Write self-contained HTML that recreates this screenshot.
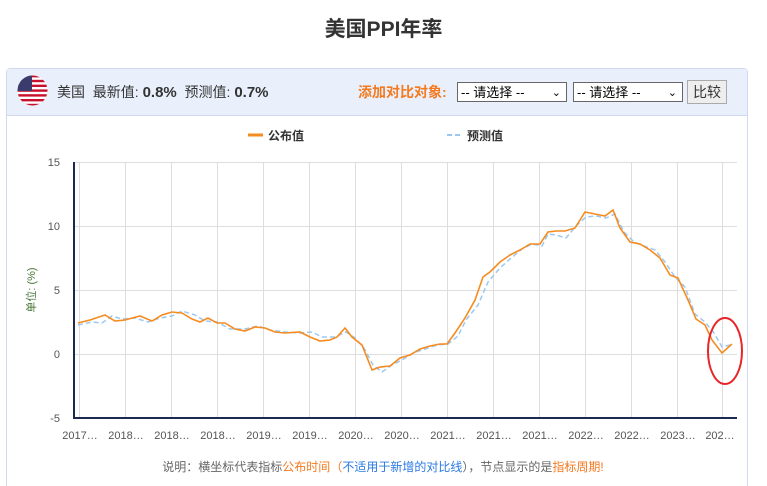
<!DOCTYPE html>
<html style="overflow:hidden;height:486px"><head><meta charset="utf-8"><style>
body{margin:0;width:767px;height:486px;background:#fff;font-family:"Liberation Sans","Noto Sans CJK SC",sans-serif;overflow:hidden;position:relative}
.t{position:absolute;left:0;width:767px;top:13px;text-align:center;font-size:21px;font-weight:bold;color:#333}
.panel{position:absolute;left:6px;top:68px;width:740px;height:425px;border:1px solid #cfdaf0;border-bottom:none;border-radius:4px 4px 0 0;background:#fff}
.hd{position:absolute;left:0;top:0;width:740px;height:46px;background:#e9f0fb;border-bottom:1px solid #cfdaf0;font-size:14px;color:#333}
.hd span{position:absolute;top:13px}
.sel{position:absolute;top:13px;height:20px;border:1px solid #666;background:#fff;font-size:13px;line-height:20px;padding-left:3px;box-sizing:border-box;color:#000}
.btn{position:absolute;top:11px;left:680px;width:40px;height:24px;border:1px solid #aaa;background:#eee;font-size:14px;line-height:22px;text-align:center;box-sizing:border-box}
</style></head><body>
<div class="t">美国PPI年率</div>
<div class="panel">
<div class="hd">
<svg style="position:absolute;left:10px;top:6px" width="31" height="31" viewBox="0 0 31 31"><defs><clipPath id="c"><circle cx="15.5" cy="15.5" r="15"/></clipPath></defs><g clip-path="url(#c)"><rect width="31" height="31" fill="#fff"/><g fill="#c8102e"><rect y="0" width="31" height="2.4"/><rect y="4.8" width="31" height="2.4"/><rect y="9.6" width="31" height="2.4"/><rect y="14.4" width="31" height="2.4"/><rect y="19.2" width="31" height="2.4"/><rect y="24" width="31" height="2.4"/><rect y="28.8" width="31" height="2.4"/></g><rect width="15" height="16" fill="#3c3b6e"/></g></svg>
<span style="left:50px">美国 &nbsp;最新值: <b style="font-size:15px">0.8%</b> &nbsp;预测值: <b style="font-size:15px">0.7%</b></span>
<span style="left:351px;color:#f47a1f;font-weight:bold">添加对比对象:</span>
<div class="sel" style="left:450px;width:110px">-- 请选择 --<span style="position:absolute;right:5px;top:0;font-size:11px">⌄</span></div>
<div class="sel" style="left:566px;width:110px">-- 请选择 --<span style="position:absolute;right:5px;top:0;font-size:11px">⌄</span></div>
<div class="btn">比较</div>
</div>
</div>
<svg style="position:absolute;left:0;top:0" width="767" height="486">
<g font-size="12" fill="#333" font-family="Liberation Sans,Noto Sans CJK SC,sans-serif">
<line x1="248" y1="135" x2="263" y2="135" stroke="#f68b1f" stroke-width="3"/><text x="268" y="140" font-weight="bold">公布值</text>
<line x1="447" y1="135" x2="462" y2="135" stroke="#9cc8f0" stroke-width="2" stroke-dasharray="5,3"/><text x="467" y="140" font-weight="bold">预测值</text>
</g>
<g stroke="#ddd" stroke-width="1">
<line x1="75" y1="162.5" x2="737" y2="162.5"/><line x1="75" y1="226.5" x2="737" y2="226.5"/><line x1="75" y1="290.5" x2="737" y2="290.5"/><line x1="75" y1="354.5" x2="737" y2="354.5"/>
<line x1="79.5" y1="162" x2="79.5" y2="418"/><line x1="125.5" y1="162" x2="125.5" y2="418"/><line x1="171.5" y1="162" x2="171.5" y2="418"/><line x1="217.5" y1="162" x2="217.5" y2="418"/><line x1="263.5" y1="162" x2="263.5" y2="418"/><line x1="309.5" y1="162" x2="309.5" y2="418"/><line x1="355.5" y1="162" x2="355.5" y2="418"/><line x1="401.5" y1="162" x2="401.5" y2="418"/><line x1="447.5" y1="162" x2="447.5" y2="418"/><line x1="493.5" y1="162" x2="493.5" y2="418"/><line x1="539.5" y1="162" x2="539.5" y2="418"/><line x1="585.5" y1="162" x2="585.5" y2="418"/><line x1="631.5" y1="162" x2="631.5" y2="418"/><line x1="677.5" y1="162" x2="677.5" y2="418"/><line x1="722.5" y1="162" x2="722.5" y2="418"/>
</g>
<line x1="74" y1="162" x2="74" y2="419" stroke="#1c2a4f" stroke-width="2"/>
<line x1="73" y1="418" x2="737" y2="418" stroke="#1c2a4f" stroke-width="2"/>
<g font-size="11" fill="#555" text-anchor="end"><text x="60" y="166">15</text><text x="60" y="230">10</text><text x="60" y="294">5</text><text x="60" y="358">0</text><text x="60" y="422">-5</text></g>
<text x="35" y="290" font-size="11" fill="#4a7a3a" transform="rotate(-90 35 290)" text-anchor="middle">单位: (%)</text>
<g font-size="11" fill="#555" text-anchor="middle"><text x="80" y="439">2017…</text><text x="126" y="439">2018…</text><text x="172" y="439">2018…</text><text x="218" y="439">2018…</text><text x="264" y="439">2019…</text><text x="310" y="439">2019…</text><text x="356" y="439">2020…</text><text x="402" y="439">2020…</text><text x="448" y="439">2021…</text><text x="494" y="439">2021…</text><text x="540" y="439">2021…</text><text x="586" y="439">2022…</text><text x="632" y="439">2022…</text><text x="678" y="439">2023…</text><text x="720" y="439">202…</text></g>
<polyline fill="none" stroke="#9cc8f0" stroke-width="1.5" stroke-dasharray="5,3" points="78,325 92,322 102,323 112,316 122,319 135,318 148,322 160,318 172,316 182,311 195,315 205,321 217,322 230,329 245,329 258,326 270,330 285,332 300,333 312,332 322,337 335,337 346,332 355,338 364,348 373,365 382,372 392,365 402,360 413,353 425,349 437,345 448,344 458,336 466,320 478,305 488,282 500,268 510,259 522,249 532,244 542,246 548,234 556,235 566,238 576,226 586,217 596,216 606,218 615,214 624,232 634,242 644,246 655,250 665,262 675,277 685,287 695,314 705,322 714,333 722,347 730,345"/>
<polyline fill="none" stroke="#f68b1f" stroke-width="1.6" points="78,323 90,320 105,315 115,321 125,320 140,316 152,321 162,315 172,312 182,313 192,319 200,322 208,318 217,323 225,323 235,329 245,331 255,327 265,328 275,332 285,333 300,332 310,337 320,341 330,340 337,337 345,328 352,337 362,345 372,370 380,367 390,366 400,358 410,355 420,349 430,346 440,344 447,344 455,333 465,318 475,300 483,277 490,272 500,262 510,255 520,250 530,244 540,244 548,232 556,231 565,231 575,228 585,212 595,214 605,216 613,210 620,228 630,242 640,244 650,250 660,258 670,275 678,278 688,300 696,319 705,325 712,340 722,353 732,344"/>
<ellipse cx="725" cy="351" rx="17" ry="33" fill="none" stroke="#e8262a" stroke-width="2"/>
<text x="383" y="471" font-size="12" text-anchor="middle" fill="#666" font-family="Liberation Sans,Noto Sans CJK SC,sans-serif">说明：横坐标代表指标<tspan fill="#f47a1f">公布时间</tspan><tspan fill="#f47a1f">（</tspan><tspan fill="#2a7ae2">不适用于新增的对比线</tspan>），节点显示的是<tspan fill="#f47a1f">指标周期!</tspan></text>
</svg>
</body></html>
